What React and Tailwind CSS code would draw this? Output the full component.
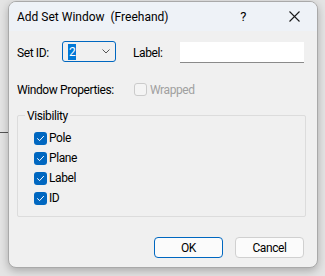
import React from "react";

const font = { fontFamily: 'Roboto, "Noto Sans", sans-serif' };

function Check() {
  return (
    <span className="flex h-[13px] w-[13px] items-center justify-center rounded-[3px] bg-[#0067c0]">
      <svg width="9" height="9" viewBox="0 0 9 9" fill="none">
        <path d="M1.5 4.6 L3.6 6.6 L7.6 2.3" stroke="#ffffff" strokeWidth="1" strokeLinecap="round" strokeLinejoin="round" />
      </svg>
    </span>
  );
}

function Row({ label }) {
  return (
    <div className="flex h-[20px] items-center">
      <Check />
      <span className="ml-[2px]">{label}</span>
    </div>
  );
}

export default function App() {
  return (
    <div
      className="relative h-[276px] w-[325px] overflow-hidden bg-[#e4e4e4] pl-2 pt-px text-[12px] leading-none tracking-[-0.4px] text-black"
      style={font}
    >
      <div className="absolute left-0 top-[132px] h-px w-2 bg-[#555]" />
      <div className="relative flex h-[267px] w-[310px] flex-col overflow-hidden rounded-lg border border-[#a9a9a9] bg-[#f0f0f0] shadow-[0_3px_8px_rgba(0,0,0,0.25)]">
        {/* title bar */}
        <div className="flex h-[29px] shrink-0 items-center bg-[#eef2f7] pl-2">
          <span className="whitespace-pre text-[12px] tracking-normal">Add Set Window  (Freehand)</span>
          <span className="ml-auto mr-[43px] text-[13px]">?</span>
          <svg className="mr-[17px]" width="11" height="11" viewBox="0 0 11 11">
            <path d="M0.5 0.5 L10.5 10.5 M10.5 0.5 L0.5 10.5" stroke="#1a1a1a" strokeWidth="1.1" />
          </svg>
        </div>

        {/* row 1 */}
        <div className="mt-[10px] flex h-[22px] items-start pl-2">
          <span className="mt-[6px] w-[45px]">Set ID:</span>
          <div className="flex h-[21px] w-[54px] items-center rounded-[3px] border border-[#0067c0] bg-[#f0f0f0] pl-[5px]">
            <span className="bg-[#0078d7] px-px py-[2px] text-white">2</span>
            <svg className="ml-auto mr-[5px]" width="8" height="5" viewBox="0 0 8 5" fill="none">
              <path d="M0.5 0.5 L4 4 L7.5 0.5" stroke="#555" strokeWidth="1" />
            </svg>
          </div>
          <span className="ml-[17px] mt-[6px] w-[47px]">Label:</span>
          <div className="mt-px h-[21px] w-[124px] border-b border-[#8a8a8a] bg-white" />
        </div>

        {/* row 2 */}
        <div className="mt-[20px] flex h-[13px] items-center pl-2">
          <span className="w-[117px]">Window Properties:</span>
          <span className="h-[13px] w-[13px] rounded-[3px] border border-[#cbcbcb] bg-[#f4f4f4]" />
          <span className="ml-[3px] text-[#a0a0a0]">Wrapped</span>
        </div>

        {/* group */}
        <div className="relative ml-2 mt-[19px] h-[102px] w-[289px] rounded-[2px] border border-[#dcdcdc] pl-4 pt-[12px]">
          <span className="absolute left-[7px] top-[-6px] bg-[#f0f0f0] px-[2px]">Visibility</span>
          <Row label="Pole" />
          <Row label="Plane" />
          <Row label="Label" />
          <Row label="ID" />
        </div>

        {/* buttons */}
        <div className="mt-[20px] flex justify-end gap-[12px] pr-[13px]">
          <button className="flex h-[21px] w-[69px] items-center justify-center rounded-[4px] border border-[#0067c0] bg-[#fbfbfb]">
            OK
          </button>
          <button className="flex h-[21px] w-[69px] items-center justify-center rounded-[4px] border border-[#d0d0d0] bg-[#fbfbfb]">
            Cancel
          </button>
        </div>
      </div>
    </div>
  );
}
